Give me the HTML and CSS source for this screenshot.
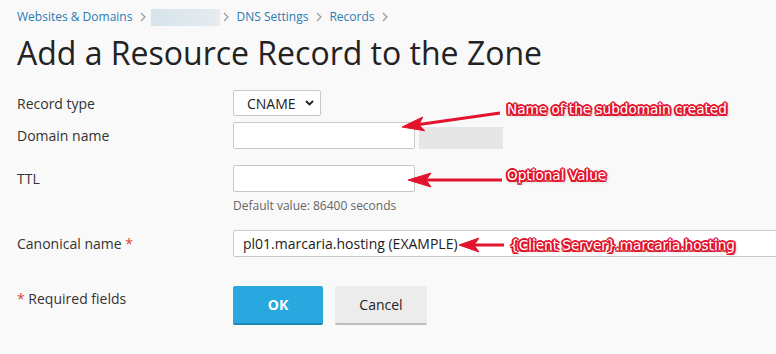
FILE: index.html
```html
<!DOCTYPE html>
<html lang="en">
<head>
    <meta charset="UTF-8">
    <meta name="viewport" content="width=device-width, initial-scale=1.0">
    <title>Add a Resource Record to the Zone</title>
    <link rel="stylesheet" href="styles.css">
</head>
<body>
    <nav class="crumbs">
        <a href="#">Websites &amp; Domains</a>
        <svg class="sep" width="6" height="10" viewBox="0 0 6 10"><path d="M1 1l4 4-4 4" fill="none" stroke="#9a9a9a" stroke-width="1.2"/></svg>
        <span class="crumb-blur"></span>
        <svg class="sep" width="6" height="10" viewBox="0 0 6 10"><path d="M1 1l4 4-4 4" fill="none" stroke="#9a9a9a" stroke-width="1.2"/></svg>
        <a href="#">DNS Settings</a>
        <svg class="sep" width="6" height="10" viewBox="0 0 6 10"><path d="M1 1l4 4-4 4" fill="none" stroke="#9a9a9a" stroke-width="1.2"/></svg>
        <a href="#">Records</a>
        <svg class="sep" width="6" height="10" viewBox="0 0 6 10"><path d="M1 1l4 4-4 4" fill="none" stroke="#9a9a9a" stroke-width="1.2"/></svg>
    </nav>

    <h1>Add a Resource Record to the Zone</h1>

    <form class="record-form">
        <div class="row row-type">
            <label for="type">Record type</label>
            <div class="select-wrap">
                <select id="type">
                    <option>CNAME</option>
                </select>
                <svg class="chev" width="9" height="6" viewBox="0 0 9 6"><path d="M1 1l3.5 3.5L8 1" fill="none" stroke="#222" stroke-width="1.8"/></svg>
            </div>
        </div>
        <div class="row row-domain">
            <label for="domain">Domain name</label>
            <input id="domain" class="field" type="text">
            <span class="domain-blur"></span>
        </div>
        <div class="row row-ttl">
            <label for="ttl">TTL</label>
            <div class="col">
                <input id="ttl" class="field" type="text">
                <span class="hint">Default value: 86400 seconds</span>
            </div>
        </div>
        <div class="row row-cname">
            <label for="cname">Canonical name <span class="req">*</span></label>
            <input id="cname" class="field field-wide" type="text" value="pl01.marcaria.hosting (EXAMPLE)">
        </div>
        <div class="row row-buttons">
            <span class="label-text"><span class="req">*</span> Required fields</span>
            <button type="button" class="btn btn-ok">OK</button>
            <button type="button" class="btn btn-cancel">Cancel</button>
        </div>
    </form>

    <!-- annotations drawn on top of the screenshot -->
    <svg class="arrows" width="776" height="354" viewBox="0 0 776 354">
        <g fill="#e2132c" stroke="#e2132c">
            <line x1="500" y1="113" x2="419" y2="124.6" stroke-width="3"/>
            <polygon points="402,127 422.8,117 418.8,124.6 424.8,130.8" stroke-width="1"/>
            <line x1="502" y1="180" x2="426" y2="180" stroke-width="3"/>
            <polygon points="408,180 431,173 426,180 431,187" stroke-width="1"/>
            <line x1="504" y1="245" x2="474" y2="245" stroke-width="3"/>
            <polygon points="459,245 479,238 474,245 479,252" stroke-width="1"/>
        </g>
    </svg>
    <div class="note note-domain">Name of the subdomain created</div>
    <div class="note note-ttl">Optional Value</div>
    <div class="note note-cname">{Client Server}.marcaria.hosting</div>
</body>
</html>
```

FILE: styles.css
```css
body {
    font-family: 'Open Sans', 'Noto Sans', sans-serif;
    background-color: #f9f9f9;
    color: #333;
    margin: 0;
    padding: 8px 0 0 17px;
    width: 759px;
    height: 346px;
    overflow: hidden;
    position: relative;
}
.crumbs {
    display: flex;
    align-items: center;
    height: 18px;
    font-size: 12px;
    line-height: 18px;
}
.crumbs a {
    color: #2c7bb3;
    text-decoration: none;
}
.crumbs .sep {
    margin: 0 7px 0 8px;
}
.crumb-blur {
    display: inline-block;
    width: 69px;
    height: 17px;
    margin: 0 -5px 0 -2px;
    background: linear-gradient(90deg, #d6e3eb, #e6ecf0);
}
h1 {
    margin: 9px 0 0;
    font-size: 32px;
    line-height: 36px;
    font-weight: 400;
    color: #222;
}
.record-form {
    margin-top: 19px;
    font-size: 14px;
}
.row {
    display: flex;
    align-items: center;
}
.row label, .row .label-text {
    width: 216px;
    flex: none;
}
.row-domain {
    margin-top: 6px;
}
.row-ttl {
    margin-top: 16px;
    align-items: flex-start;
}
.row-ttl label {
    line-height: 27px;
}
.row-cname {
    margin-top: 16px;
}
.row-buttons {
    margin-top: 29px;
    align-items: flex-start;
}
.row-buttons .label-text {
    padding-top: 3px;
}
.req {
    color: #d6453d;
}
.select-wrap {
    position: relative;
}
select {
    appearance: none;
    -webkit-appearance: none;
    width: 88px;
    height: 26px;
    padding: 0 0 0 13px;
    font-family: inherit;
    font-size: 14px;
    color: #222;
    background: #fff;
    border: 1px solid #c8c8c8;
    border-radius: 2px;
}
.chev {
    position: absolute;
    right: 7px;
    top: 10px;
}
.field {
    box-sizing: border-box;
    width: 182px;
    height: 27px;
    padding: 0 9px;
    font-family: inherit;
    font-size: 14px;
    color: #222;
    background: #fff;
    border: 1px solid #c8c8c8;
    border-radius: 2px;
}
.field-wide {
    width: 560px;
    flex: none;
}
.domain-blur {
    width: 84px;
    height: 22px;
    margin: 4px 0 0 4px;
    background: #e6e6e6;
}
.col {
    display: flex;
    flex-direction: column;
}
.hint {
    margin-top: 6px;
    font-size: 12px;
    line-height: 16px;
    color: #666;
}
.btn {
    box-sizing: border-box;
    height: 39px;
    font-family: inherit;
    font-size: 14px;
    border: 0;
    border-radius: 2px;
    cursor: pointer;
}
.btn-ok {
    width: 90px;
    font-weight: 700;
    color: #fff;
    background: #28a8de;
    border-bottom: 2px solid #1e87b4;
}
.btn-cancel {
    width: 92px;
    margin-left: 12px;
    color: #222;
    background: #ececec;
    border-bottom: 2px solid #bcbcbc;
}
.arrows {
    position: absolute;
    left: 0;
    top: 0;
    pointer-events: none;
}
.note {
    position: absolute;
    font-family: 'DejaVu Sans', Verdana, sans-serif;
    font-size: 13.6px;
    line-height: 16px;
    color: #fff;
    white-space: nowrap;
    text-shadow: 2px 0 0 #e2132c, -2px 0 0 #e2132c, 0 2px 0 #e2132c, 0 -2px 0 #e2132c,
        1.5px 1.5px 0 #e2132c, -1.5px 1.5px 0 #e2132c, 1.5px -1.5px 0 #e2132c, -1.5px -1.5px 0 #e2132c,
        2px 2px 3px rgba(0, 0, 0, 0.35);
}
.note-domain {
    left: 507px;
    top: 101px;
}
.note-ttl {
    left: 507px;
    top: 167px;
}
.note-cname {
    left: 510px;
    top: 237px;
}
```
